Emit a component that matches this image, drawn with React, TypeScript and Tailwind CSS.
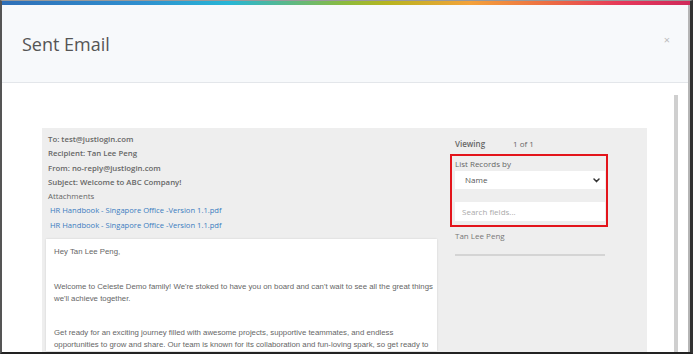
import React from 'react';

const openSans = { fontFamily: '"Open Sans", "Noto Sans", sans-serif' };

export default function App() {
  return (
    <div className="flex h-[354px] w-[693px] flex-col overflow-hidden border-t border-b-2 border-l-2 border-r-[3px] border-t-[#9a9a9a] border-b-[#222] border-l-[#555] border-r-[#333] bg-white" style={openSans}>
      <div className="h-[4px] shrink-0 bg-[linear-gradient(90deg,#2f6fb7_0%,#2f8fcf_20%,#27b6d6_33%,#8dbb3c_50%,#b7b51f_56%,#f4a23a_68%,#ec6a43_80%,#e6385a_90%,#cf2a5a_100%)]" />
      <div className="flex flex-1 min-h-0 border-r-2 border-r-[#b5b5b5]">
        <div className="flex flex-1 min-w-0 flex-col">
          <header className="flex h-[78px] shrink-0 items-start justify-between border-b border-[#e3e6ea] bg-[#f7f9fb] pl-[20px] pr-[18px]">
            <h1 className="mt-[27px] text-[18px] leading-[24px] text-[#555]">Sent Email</h1>
            <span className="mt-[28px] text-[11px] leading-[14px] text-[#bbb]">×</span>
          </header>

          <div className="flex flex-1 min-h-0">
            <div className="flex-1 min-w-0 pl-[40px] pt-[45px]">
              <div className="flex h-full w-[605px] bg-[#eeeeee]">
                {/* email column */}
                <div className="w-[395px] shrink-0 pl-[4px] pt-[4px]">
                  <div className="px-[2px] text-[7.8px] leading-[14.3px] text-[#666]">
                    <div className="font-semibold">To: test@justlogin.com</div>
                    <div className="font-semibold">Recipient: Tan Lee Peng</div>
                    <div className="font-semibold">From: no-reply@justlogin.com</div>
                    <div className="font-semibold">Subject: Welcome to ABC Company!</div>
                    <div>Attachments</div>
                    <div className="pl-[2px] text-[7.6px] text-[#3a7cc0]">HR Handbook - Singapore Office -Version 1.1.pdf</div>
                    <div className="pl-[2px] text-[7.6px] text-[#3a7cc0]">HR Handbook - Singapore Office -Version 1.1.pdf</div>
                  </div>
                  <div className="mt-[7px] w-[391px] bg-white pl-[8px] pr-[4px] pt-[7px] text-[7.8px] leading-[12px] text-[#666] shadow-[0_0_2px_rgba(0,0,0,0.12)]" style={{ fontFamily: '"Liberation Sans", Arial, sans-serif' }}>
                    <p>Hey Tan Lee Peng,</p>
                    <p className="mt-[23px]">Welcome to Celeste Demo family! We're stoked to have you on board and can't wait to see all the great things we'll achieve together.</p>
                    <p className="mt-[22px]">Get ready for an exciting journey filled with awesome projects, supportive teammates, and endless opportunities to grow and share. Our team is known for its collaboration and fun-loving spark, so get ready to</p>
                  </div>
                </div>

                {/* side column */}
                <div className="ml-[13px] w-[158px] shrink-0 pt-[10px] text-[8px] text-[#666]">
                  <div className="flex px-[5px] leading-[12px]">
                    <span className="w-[58px] font-semibold">Viewing</span>
                    <span>1 of 1</span>
                  </div>
                  <div className="mt-[4px] border-2 border-[#e3141b] pb-[4px] pl-[3px] pr-[1px] pt-[2px]">
                    <div className="leading-[12px]">List Records by</div>
                    <div className="mt-[1px] flex h-[18px] items-center justify-between bg-white pl-[10px] pr-[5px] text-[#555]">
                      <span>Name</span>
                      <svg width="7" height="5" viewBox="0 0 7 5" fill="none">
                        <path d="M1 1 L3.5 3.6 L6 1" stroke="#333" strokeWidth="1.5" strokeLinecap="round" strokeLinejoin="round" />
                      </svg>
                    </div>
                    <div className="mt-[13px] flex h-[19px] items-center bg-white pl-[7px] text-[#aaa]">Search fields...</div>
                  </div>
                  <div className="mt-[3px] px-[5px] leading-[12px] text-[#777]">Tan Lee Peng</div>
                  <div className="mx-[5px] mt-[12px] h-[2px] w-[150px] bg-[#d4d4d4]" />
                </div>
              </div>
            </div>
            <div className="ml-[27px] mr-[10px] mt-[12px] w-[4px] shrink-0 bg-[#cfcfcf]" />
          </div>
        </div>
      </div>
    </div>
  );
}
